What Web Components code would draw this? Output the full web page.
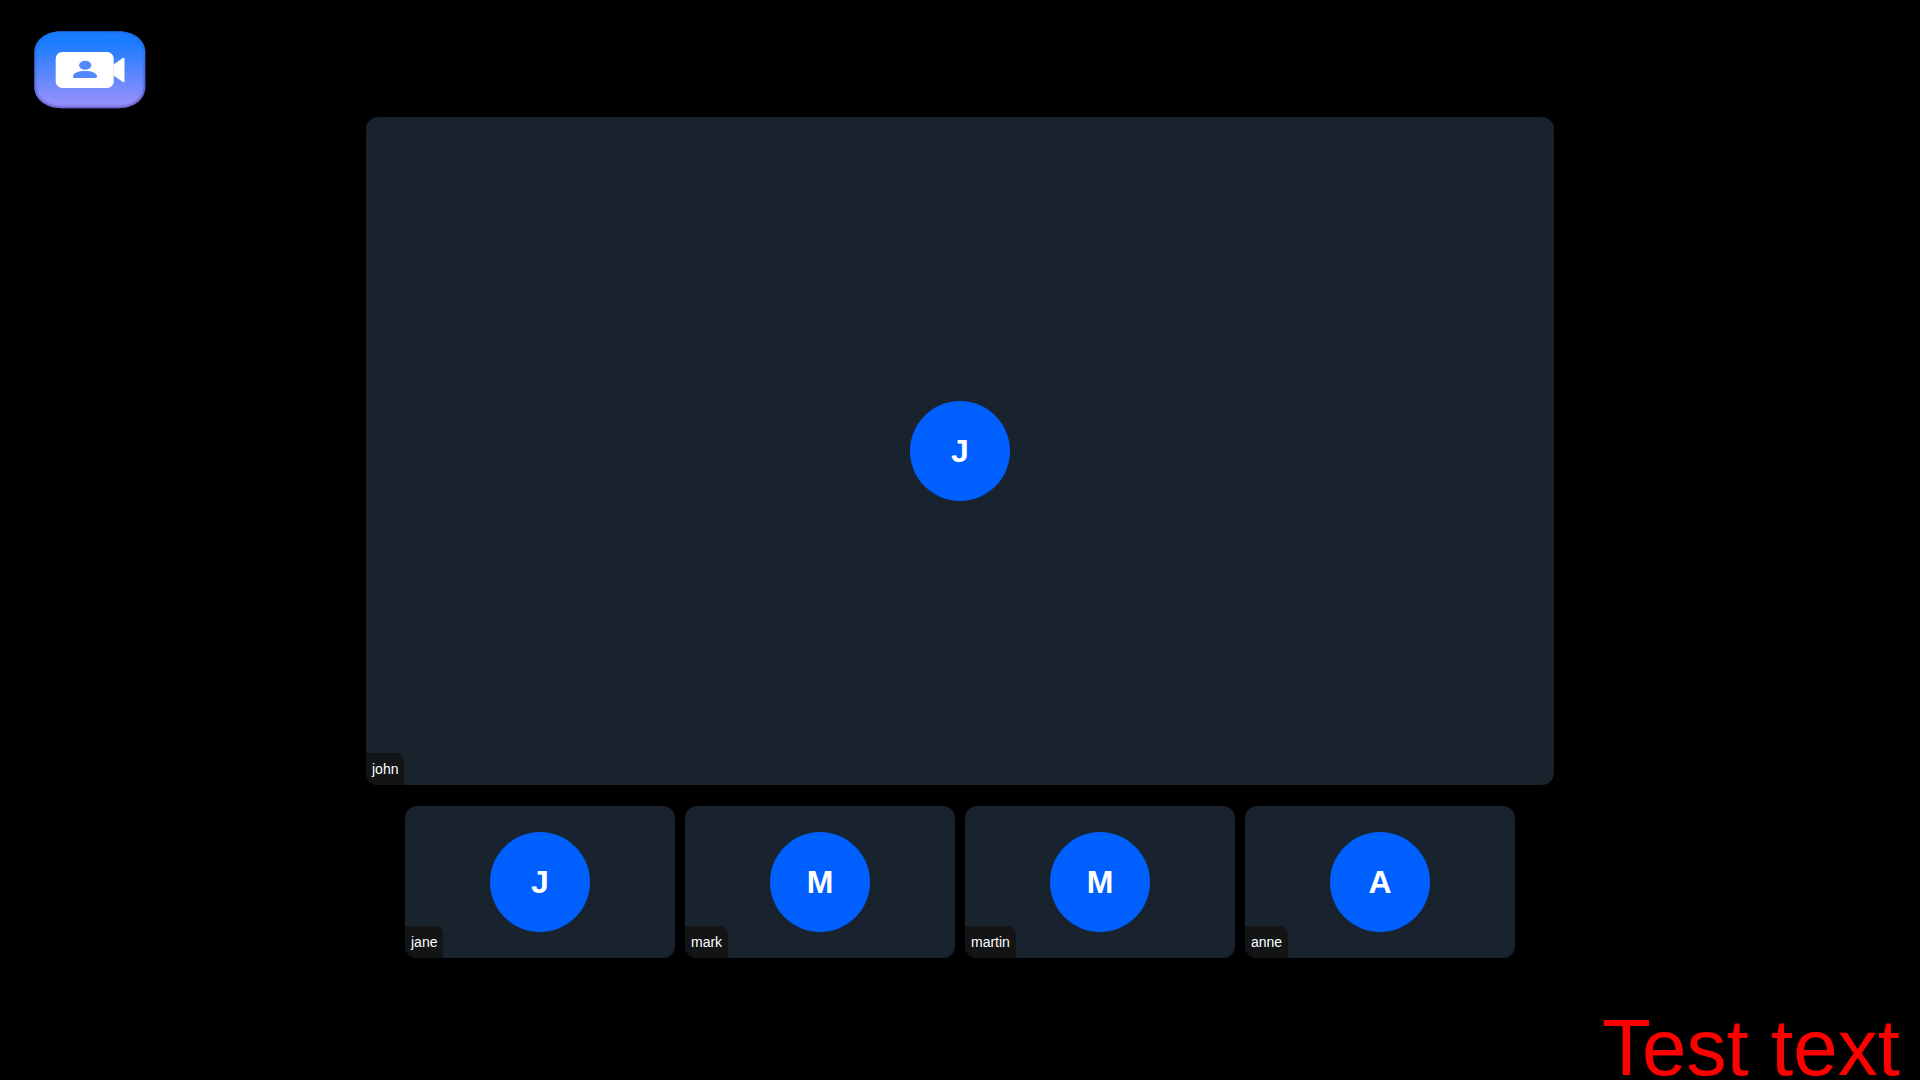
<!DOCTYPE html>
<html lang="en">
<head>
<meta charset="utf-8">
<meta name="viewport" content="width=device-width, initial-scale=1">
<title>Video call</title>
<style>
  body { margin: 0; background: #000; font-family: "Liberation Sans", Arial, sans-serif; }
</style>
</head>
<body>
<call-layout>
  <call-logo slot="logo"></call-logo>
  <participant-tile slot="spotlight" name="john"></participant-tile>
  <participant-tile slot="bar" name="jane"></participant-tile>
  <participant-tile slot="bar" name="mark"></participant-tile>
  <participant-tile slot="bar" name="martin"></participant-tile>
  <participant-tile slot="bar" name="anne"></participant-tile>
  <title-overlay slot="title">Test text</title-overlay>
</call-layout>

<template id="layout-template">
  <style>
    :host { display: flex; flex-direction: column; min-height: 100vh; box-sizing: border-box; }
    header { display: flex; padding: 31px 34px 8px; }
    main { display: flex; flex-direction: column; align-items: center; gap: 21px; }
    .spotlight { width: 61.875%; }
    .bar { width: 57.8125%; display: grid; grid-template-columns: repeat(4, minmax(0, 1fr)); gap: 10px; }
    footer { flex: 1; display: flex; justify-content: flex-end; align-items: flex-end; padding: 0 20px; }
  </style>
  <header><slot name="logo"></slot></header>
  <main>
    <section class="spotlight"><slot name="spotlight"></slot></section>
    <section class="bar"><slot name="bar"></slot></section>
  </main>
  <footer><slot name="title"></slot></footer>
</template>

<template id="tile-template">
  <style>
    :host {
      display: flex; align-items: center; justify-content: center;
      position: relative; overflow: hidden; aspect-ratio: 16 / 9;
      border-radius: 12px; background: #19232d;
    }
    .avatar {
      width: 100px; height: 100px; border-radius: 50%;
      display: flex; align-items: center; justify-content: center;
      background: #005fff; color: #fff; font-size: 32px; font-weight: 700;
    }
    .name {
      position: absolute; left: 0; bottom: 0; padding: 0 6px;
      border-top-right-radius: 8px; background: #121416; color: #fff;
      font-size: 14px; line-height: 32px;
    }
  </style>
  <div class="avatar"></div>
  <span class="name"></span>
</template>

<template id="logo-template">
  <style>
    :host { display: block; }
    svg { display: block; }
  </style>
  <svg width="112" height="78" viewBox="0 0 112 78" role="img" aria-label="Video call">
    <defs>
      <linearGradient id="fill" x1="0" y1="0" x2="0" y2="1">
        <stop offset="0.15" stop-color="#1a7cff"/>
        <stop offset="0.9" stop-color="#918ffb"/>
      </linearGradient>
      <linearGradient id="edge" x1="0" y1="0" x2="0.3" y2="1">
        <stop offset="0" stop-color="#1464d8" stop-opacity=".3"/>
        <stop offset="1" stop-color="#3a2f90" stop-opacity=".6"/>
      </linearGradient>
      <filter id="soft"><feGaussianBlur stdDeviation="1.2"/></filter>
      <clipPath id="shape"><path d="M27 .3H84.5C101 .3 111.300 10 111.300 21V56C111.300 67.500 101 77.200 84.500 77.200H27C11 77.200 .3 67.500 .3 56V21C.3 10 11 .3 27 .3Z"/></clipPath>
    </defs>
    <g clip-path="url(#shape)">
      <rect width="112" height="78" fill="url(#fill)"/>
      <path d="M27 .3H84.5C101 .3 111.300 10 111.300 21V56C111.300 67.500 101 77.200 84.500 77.200H27C11 77.200 .3 67.500 .3 56V21C.3 10 11 .3 27 .3Z" fill="none" stroke="url(#edge)" stroke-width="3" filter="url(#soft)"/>
    </g>
    <g fill="#fff">
      <rect x="21.7" y="21" width="58" height="36" rx="6.5"/>
      <path d="M79.500 33.500L88.500 27.200Q90.500 26 90.500 28V50Q90.500 52 88.500 50.800L79.500 44.500Z"/>
    </g>
    <g fill="#5488ff">
      <ellipse cx="51.2" cy="34.3" rx="6.1" ry="4.5"/>
      <path d="M39 45.5C39 42 44 40 51 40S63 42 63 45.5Q63 47 61.5 47H40.5Q39 47 39 45.5Z"/>
    </g>
  </svg>
</template>

<template id="title-template">
  <style>
    :host { display: block; color: #f00; font-size: 80px; line-height: 64px; white-space: nowrap; }
  </style>
  <slot></slot>
</template>

<script>
  class TemplateElement extends HTMLElement {
    constructor() {
      super();
      const template = document.getElementById(this.constructor.template);
      this.attachShadow({ mode: "open" }).append(template.content.cloneNode(true));
    }
  }

  class CallLayout extends TemplateElement {
    static template = "layout-template";
  }

  class ParticipantTile extends TemplateElement {
    static template = "tile-template";
    connectedCallback() {
      const name = this.getAttribute("name");
      this.shadowRoot.querySelector(".name").textContent = name;
      this.shadowRoot.querySelector(".avatar").textContent = name.charAt(0).toUpperCase();
    }
  }

  class CallLogo extends TemplateElement {
    static template = "logo-template";
  }

  class TitleOverlay extends TemplateElement {
    static template = "title-template";
  }

  customElements.define("call-layout", CallLayout);
  customElements.define("participant-tile", ParticipantTile);
  customElements.define("call-logo", CallLogo);
  customElements.define("title-overlay", TitleOverlay);
</script>
</body>
</html>
